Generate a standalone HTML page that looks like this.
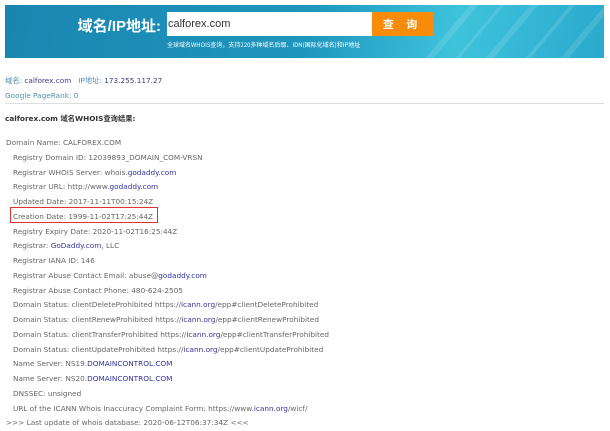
<!DOCTYPE html>
<html><head><meta charset="utf-8"><style>
body{margin:0;width:610px;height:431px;background:#fff;overflow:hidden;font-family:"DejaVu Sans","Noto Sans CJK SC",sans-serif;position:relative}
.ban{position:absolute;left:5px;top:5px;width:599px;height:53px;background:linear-gradient(100deg,#1a86b0 0%,#1e95bd 50%,#3ec3dc 75%,#2aa9cc 100%);overflow:hidden}
.ban .s{position:absolute;top:-20px;width:8px;height:100px;background:rgba(255,255,255,.12);transform:skewX(-40deg)}
.lbl{position:absolute;left:70px;width:86px;text-align:right;top:10px;color:#fff;font:bold 15px "Liberation Sans","Noto Sans CJK SC",sans-serif;white-space:nowrap}
.inp{position:absolute;left:162px;top:7px;width:210px;height:24px;background:#fff;font:11px "Liberation Sans",sans-serif;color:#333;line-height:24px;padding-left:1px;box-sizing:border-box}
.btn{position:absolute;left:367px;top:7px;width:61px;height:24px;background:#f98b0a;color:#fff;font:bold 11px "Noto Sans CJK SC",sans-serif;text-align:center;line-height:24px;letter-spacing:5px}
.sub{position:absolute;left:162px;top:35px;color:#fff;font:6px "Noto Sans CJK SC",sans-serif;white-space:nowrap}
.info{position:absolute;left:5px;font-size:7.3px;color:#4f8fae;white-space:nowrap;font-family:"DejaVu Sans","Noto Sans CJK SC",sans-serif}
.info b{font-weight:normal;color:#3a3a8a}
.hr{position:absolute;left:5px;top:103px;width:599px;height:1px;background:#ddd}
.ttl{position:absolute;left:5px;top:114px;font:bold 7.3px "DejaVu Sans","Noto Sans CJK SC",sans-serif;color:#333;white-space:nowrap}
.w{position:absolute;left:0;top:136px;font-size:7.3px;color:#666;line-height:14.75px;white-space:nowrap}
.w div{padding-left:13px}
.w div.f{padding-left:6px}
.w a{color:#33339a;text-decoration:none}
.box{position:absolute;left:10px;top:207px;width:148px;height:16px;border:1px solid #d33;box-sizing:border-box}
</style></head><body>
<div class="ban">
<div class="s" style="left:440px"></div><div class="s" style="left:470px;width:4px"></div><div class="s" style="left:500px"></div><div class="s" style="left:540px;width:5px"></div><div class="s" style="left:575px"></div>
<div class="lbl">域名/IP地址:</div>
<div class="inp">calforex.com</div>
<div class="btn">查 询</div>
<div class="sub">全球域名WHOIS查询，支持220多种域名后缀、IDN(国际化域名)和IP地址</div>
</div>
<div class="info" style="top:76px">域名: <b>calforex.com</b> &nbsp; IP地址: <b>173.255.117.27</b></div>
<div class="info" style="top:91px">Google PageRank: 0</div>
<div class="hr"></div>
<div class="ttl">calforex.com 域名WHOIS查询结果:</div>
<div class="w">
<div class="f">Domain Name: CALFOREX.COM</div>
<div>Registry Domain ID: 12039893_DOMAIN_COM-VRSN</div>
<div>Registrar WHOIS Server: whois.<a>godaddy.com</a></div>
<div>Registrar URL: http://www.<a>godaddy.com</a></div>
<div>Updated Date: 2017-11-11T00:15:24Z</div>
<div>Creation Date: 1999-11-02T17:25:44Z</div>
<div>Registry Expiry Date: 2020-11-02T16:25:44Z</div>
<div>Registrar: <a>GoDaddy.com</a>, LLC</div>
<div>Registrar IANA ID: 146</div>
<div>Registrar Abuse Contact Email: abuse@<a>godaddy.com</a></div>
<div>Registrar Abuse Contact Phone: 480-624-2505</div>
<div>Domain Status: clientDeleteProhibited https://<a>icann.org</a>/epp#clientDeleteProhibited</div>
<div>Domain Status: clientRenewProhibited https://<a>icann.org</a>/epp#clientRenewProhibited</div>
<div>Domain Status: clientTransferProhibited https://<a>icann.org</a>/epp#clientTransferProhibited</div>
<div>Domain Status: clientUpdateProhibited https://<a>icann.org</a>/epp#clientUpdateProhibited</div>
<div>Name Server: NS19.<a>DOMAINCONTROL.COM</a></div>
<div>Name Server: NS20.<a>DOMAINCONTROL.COM</a></div>
<div>DNSSEC: unsigned</div>
<div>URL of the ICANN Whois Inaccuracy Complaint Form: https://www.<a>icann.org</a>/wicf/</div>
<div class="f">&gt;&gt;&gt; Last update of whois database: 2020-06-12T06:37:34Z &lt;&lt;&lt;</div>
</div>
<div class="box"></div>
</body></html>
